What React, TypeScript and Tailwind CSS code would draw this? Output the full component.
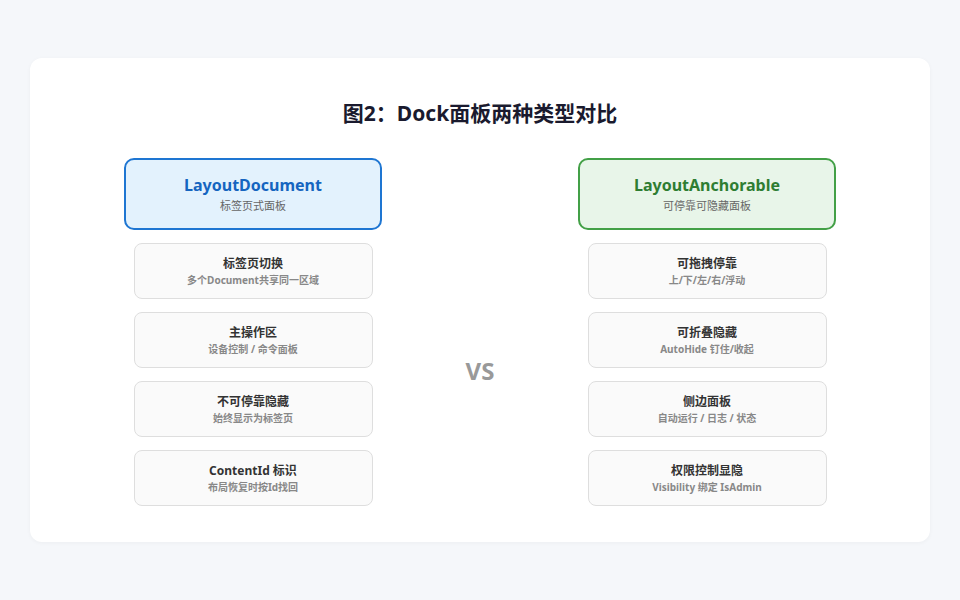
const F = { fontFamily: '"Noto Sans", "Noto Sans CJK SC", sans-serif' };
const left = [["标签页切换","多个Document共享同一区域"],["主操作区","设备控制 / 命令面板"],["不可停靠隐藏","始终显示为标签页"],["ContentId 标识","布局恢复时按Id找回"]];
const right = [["可拖拽停靠","上/下/左/右/浮动"],["可折叠隐藏","AutoHide 钉住/收起"],["侧边面板","自动运行 / 日志 / 状态"],["权限控制显隐","Visibility 绑定 IsAdmin"]];
function Col({title,sub,items,green}:{title:string;sub:string;items:string[][];green?:boolean}){
  return <div className="w-[258px] flex flex-col items-center">
    <div className={`w-full h-[72px] rounded-[10px] border-2 flex flex-col items-center justify-center ${green?"border-[#43a047] bg-[#e8f5e9]":"border-[#1e76d2] bg-[#e3f2fd]"}`}>
      <div className={`text-[16px] font-bold leading-[22px] ${green?"text-[#2e7d32]":"text-[#1565c0]"}`}>{title}</div>
      <div className="text-[11px] text-[#666] leading-[16px] mt-[2px]">{sub}</div>
    </div>
    <div className="flex flex-col gap-[13px] mt-[13px]">
      {items.map(([a,b])=> <div key={a} className="w-[239px] h-[56px] rounded-[8px] border border-[#dedede] bg-[#fafafa] flex flex-col items-center justify-center">
        <div className="text-[12px] font-bold text-[#333] leading-[17px]">{a}</div>
        <div className="text-[10px] font-bold text-[#888] leading-[14px] mt-[1px]">{b}</div>
      </div>)}
    </div>
  </div>;
}
export default function App(){
  return <div style={F} className="w-[960px] h-[600px] bg-[#f5f7fa] pt-[58px] px-[30px]">
    <div className="h-[484px] bg-white rounded-[12px] flex flex-col items-center pt-[38px] shadow-[0_1px_4px_rgba(0,0,0,0.04)]">
      <div className="text-[21px] font-bold text-[#1a1a2e] leading-[34px]">图2：Dock面板两种类型对比</div>
      <div className="flex mt-[28px]">
        <Col title="LayoutDocument" sub="标签页式面板" items={left}/>
        <div className="w-[196px] flex items-center justify-center pt-[78px]"><span className="text-[24px] font-bold text-[#999]">VS</span></div>
        <Col title="LayoutAnchorable" sub="可停靠可隐藏面板" items={right} green/>
      </div>
    </div>
  </div>;
}
